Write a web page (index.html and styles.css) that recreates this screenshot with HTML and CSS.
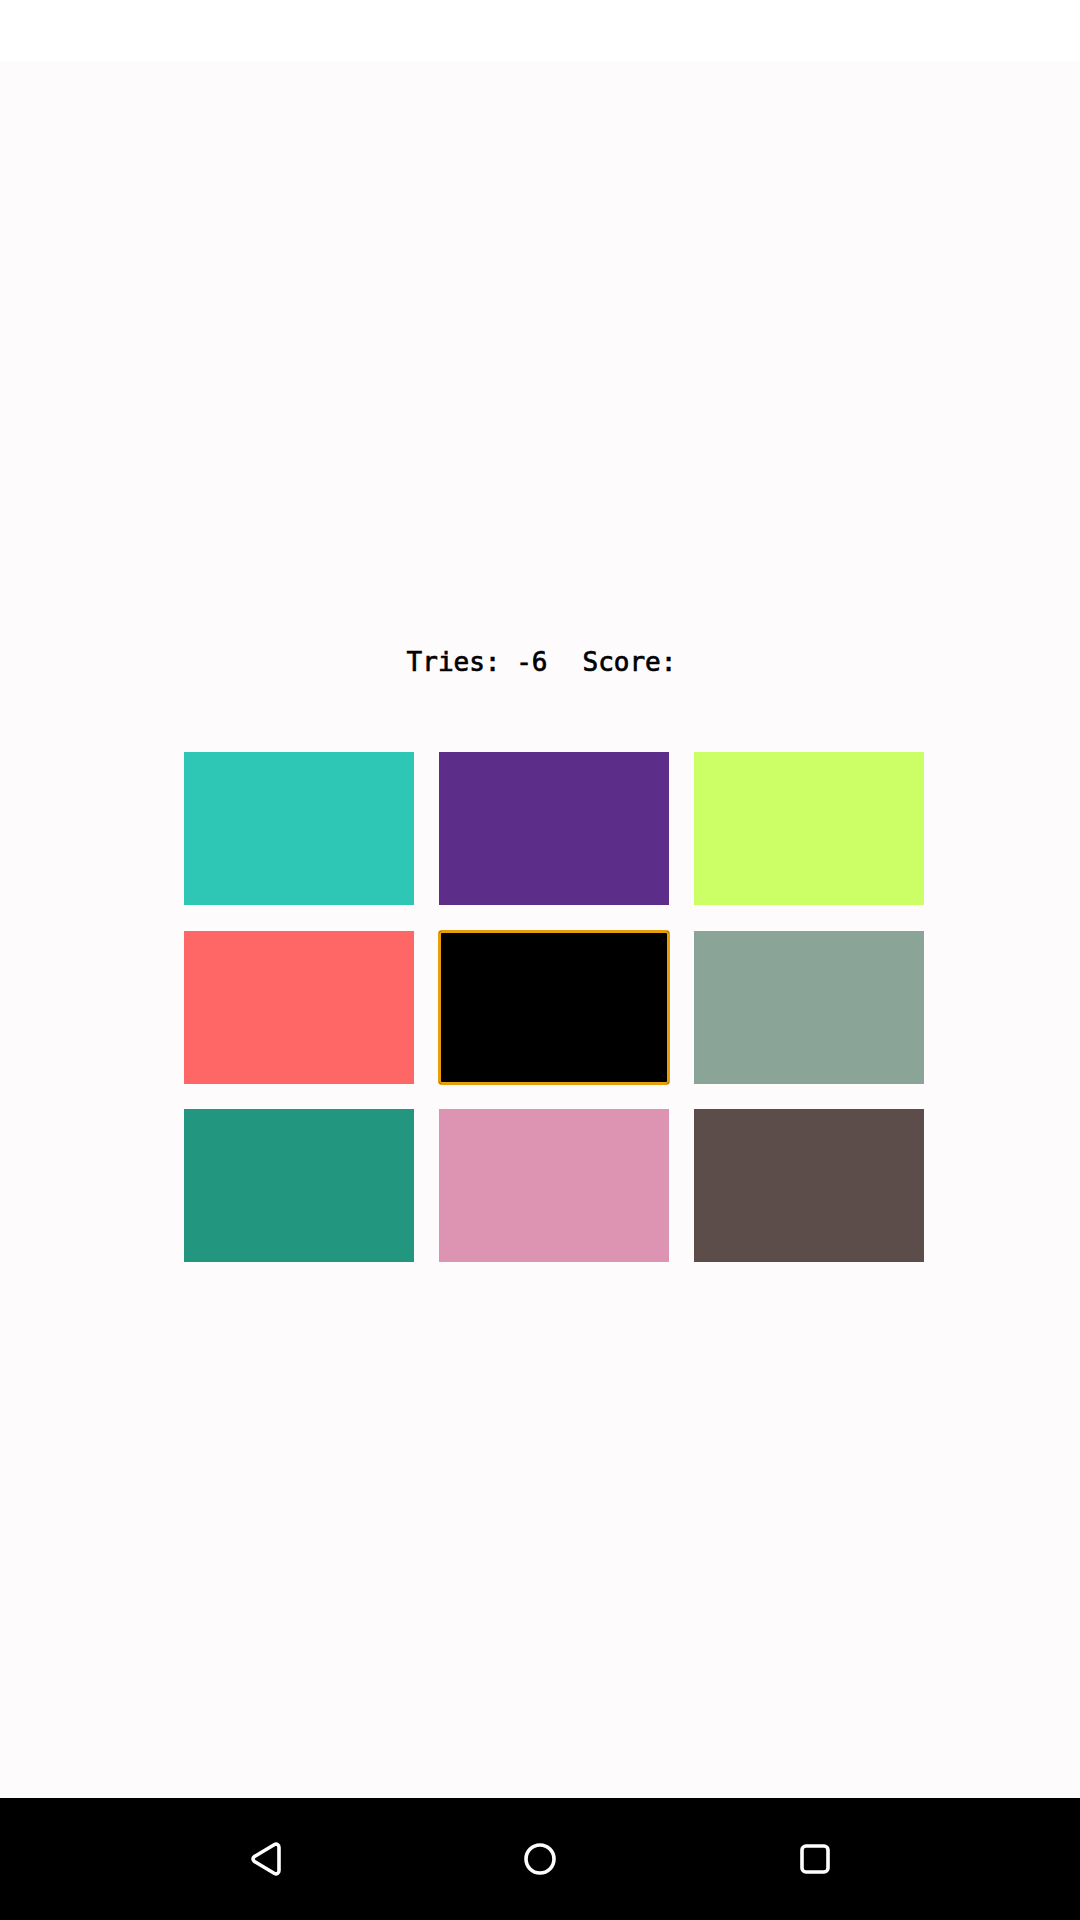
FILE: index.html

```html
<!DOCTYPE html>
<html lang="en">
<head>
    <meta charset="UTF-8">
    <meta name="viewport" content="width=device-width, initial-scale=1.0">
    <title>Color Game</title>
    <link rel="stylesheet" href="styles.css">
</head>
<body>
    <div class="status-bar"></div>
    <main class="game">
        <p class="score-line"><span>Tries: -6</span><span>Score:</span></p>
        <div class="board">
            <div class="cell teal"></div>
            <div class="cell purple"></div>
            <div class="cell lime"></div>
            <div class="cell coral"></div>
            <div class="cell black selected"></div>
            <div class="cell sage"></div>
            <div class="cell green"></div>
            <div class="cell pink"></div>
            <div class="cell brown"></div>
        </div>
    </main>
    <nav class="nav-bar">
        <div class="nav-btn">
            <svg width="36" height="36" viewBox="0 0 36 36" fill="none" stroke="#fff" stroke-width="3.6">
                <path d="M31 6.5V29.5C31 32.5 28.5 33.5 26.5 32.5L6.5 20.5C4.5 19 4.5 17 6.5 15.5L26.5 3.5C28.5 2.5 31 3.5 31 6.5Z"/>
            </svg>
        </div>
        <div class="nav-btn">
            <svg width="36" height="36" viewBox="0 0 36 36" fill="none" stroke="#fff" stroke-width="3.6">
                <circle cx="18" cy="18" r="14"/>
            </svg>
        </div>
        <div class="nav-btn">
            <svg width="36" height="36" viewBox="0 0 36 36" fill="none" stroke="#fff" stroke-width="3.6">
                <rect x="5" y="5" width="26" height="26" rx="4"/>
            </svg>
        </div>
    </nav>
</body>
</html>
```

FILE: styles.css

```css
body {
    margin: 0;
    height: 1920px;
    display: flex;
    flex-direction: column;
    background: #fefbfd;
    font-family: "DejaVu Sans Mono", monospace;
}

.status-bar {
    height: 62px;
    background: #fff;
}

.game {
    flex: 1;
    display: flex;
    flex-direction: column;
    align-items: center;
    padding-top: 584px;
}

.score-line {
    display: flex;
    gap: 35px;
    margin: 0 0 73px 3px;
    height: 33px;
    line-height: 33px;
    font-size: 26px;
    font-weight: 500;
    color: #000;
    -webkit-text-stroke: 0.7px #000;
}

.board {
    display: grid;
    grid-template-columns: repeat(3, 230px);
    grid-auto-rows: 153px;
    column-gap: 25px;
    row-gap: 25.5px;
    margin-left: 28px;
}

.teal { background: #2ec7b6; }
.purple { background: #5c2e8a; }
.lime { background: #ccff66; }
.coral { background: #ff6666; }
.black { background: #000; }
.sage { background: #8aa498; }
.green { background: #23967f; }
.pink { background: #dd93b2; }
.brown { background: #5c4d4a; }

.selected {
    border-radius: 3px;
    box-shadow: 0 0 0 1px #e89d0a, inset 0 0 0 2px #e89d0a;
}

.nav-bar {
    height: 122px;
    background: #000;
    display: flex;
    justify-content: center;
    align-items: center;
}

.nav-btn {
    width: 274.5px;
    display: flex;
    justify-content: center;
}
```
